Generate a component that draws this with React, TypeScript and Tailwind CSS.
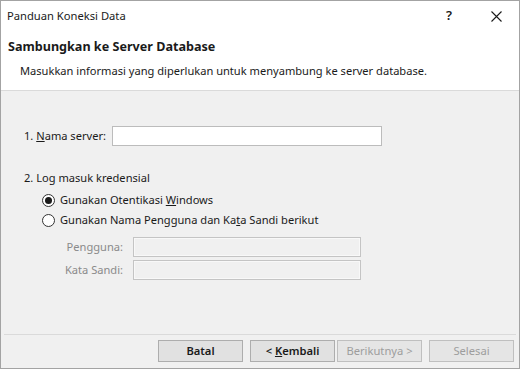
import React from "react";

const font = { fontFamily: '"Noto Sans", "Open Sans", sans-serif' };

const Radio = ({ checked }: { checked?: boolean }) => (
  <span className="w-[13px] h-[13px] rounded-full border border-[#333] bg-white flex items-center justify-center shrink-0">
    {checked && <span className="w-[7px] h-[7px] rounded-full bg-[#1a1a1a]" />}
  </span>
);

const Btn = ({ children, disabled }: { children: React.ReactNode; disabled?: boolean }) => (
  <div
    className={
      "w-[85px] h-[22px] flex items-center justify-center text-[11.2px] border whitespace-pre " +
      (disabled
        ? "border-[#bfbfbf] bg-[#e5e5e5] text-[#9d9d9d]"
        : "border-[#adadad] bg-[#e1e1e1] text-[#1a1a1a] font-semibold")
    }
  >
    <span>{children}</span>
  </div>
);

export default function App() {
  return (
    <div
      style={font}
      className="w-[520px] h-[369px] bg-white border border-[#a3a3a3] flex flex-col text-[#1a1a1a] overflow-hidden"
    >
      <div className="h-[30px] flex items-center pl-[6px] text-[11.2px]">
        <span className="flex-1">Panduan Koneksi Data</span>
        <span className="w-[10px] text-[13px] font-semibold mr-[35px]">?</span>
        <svg width="11" height="11" viewBox="0 0 11 11" className="mr-[17px]">
          <path d="M0.5 0.5 L10.5 10.5 M10.5 0.5 L0.5 10.5" stroke="#1a1a1a" strokeWidth="1.1" />
        </svg>
      </div>
      <div className="h-[60px] border-b border-[#dadada] flex flex-col">
        <div className="pl-[7px] pt-[6px] text-[12.6px] font-bold leading-[20px]">
          Sambungkan ke Server Database
        </div>
        <div className="pl-[19px] pt-[6px] text-[11.1px] leading-[16px]">
          Masukkan informasi yang diperlukan untuk menyambung ke server database.
        </div>
      </div>
      <div className="flex-1 bg-[#f0f0f0] flex flex-col text-[11.1px]">
        <div className="flex items-center pl-[23px] mt-[35px] h-[20px]">
          <span className="w-[88px] whitespace-nowrap">
            1. <span className="underline">N</span>ama server:
          </span>
          <div className="w-[270px] h-[20px] bg-white border border-[#bcbcbc]" />
        </div>
        <div className="pl-[23px] mt-[24px] leading-[16px]">2. Log masuk kredensial</div>
        <div className="flex items-center gap-[5px] pl-[41px] mt-[6px] h-[16px]">
          <Radio checked />
          <span>
            Gunakan Otentikasi <span className="underline">W</span>indows
          </span>
        </div>
        <div className="flex items-center gap-[5px] pl-[41px] mt-[4px] h-[16px]">
          <Radio />
          <span>
            Gunakan Nama Pengguna dan Ka<span className="underline">t</span>a Sandi berikut
          </span>
        </div>
        <div className="flex items-center mt-[9px] h-[20px] text-[#8a8a8a]">
          <span className="w-[132px] text-right pr-[10px]">Pengguna:</span>
          <div className="w-[228px] h-[20px] border border-[#c4c4c4] bg-[#f0f0f0] shadow-[inset_0_0_0_1px_#f8f8f8]" />
        </div>
        <div className="flex items-center mt-[3px] h-[20px] text-[#8a8a8a]">
          <span className="w-[132px] text-right pr-[10px]">Kata Sandi:</span>
          <div className="w-[228px] h-[20px] border border-[#c4c4c4] bg-[#f0f0f0] shadow-[inset_0_0_0_1px_#f8f8f8]" />
        </div>
        <div className="flex-1" />
        <div className="mx-[3px] border-t border-[#dadada]" />
        <div className="flex justify-end pr-[5px] pt-[5px] pb-[6px]">
          <Btn>Batal</Btn>
          <div className="w-[7px]" />
          <Btn>
            {"< "}
            <span className="underline">K</span>embali
          </Btn>
          <div className="w-[2px]" />
          <Btn disabled>Berikutnya &gt;</Btn>
          <div className="w-[7px]" />
          <Btn disabled>Selesai</Btn>
        </div>
      </div>
    </div>
  );
}
